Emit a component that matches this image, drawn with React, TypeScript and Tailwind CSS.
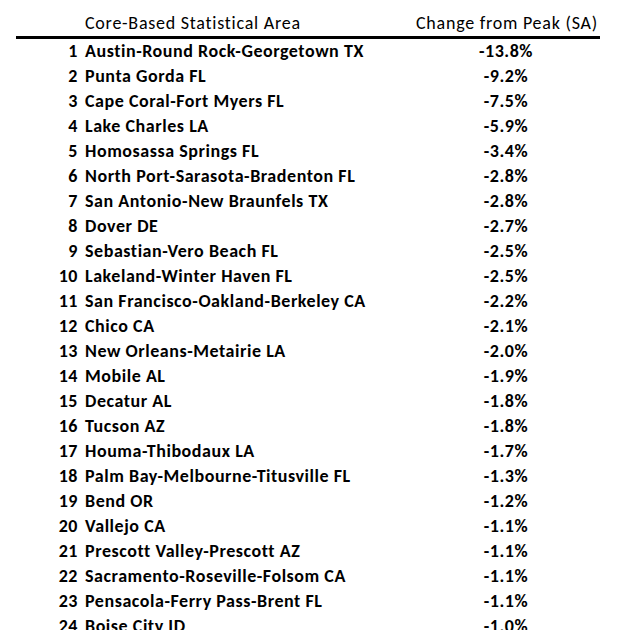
import React from "react";

const rows: [string, string][] = [
  ["Austin-Round Rock-Georgetown TX", "-13.8%"],
  ["Punta Gorda FL", "-9.2%"],
  ["Cape Coral-Fort Myers FL", "-7.5%"],
  ["Lake Charles LA", "-5.9%"],
  ["Homosassa Springs FL", "-3.4%"],
  ["North Port-Sarasota-Bradenton FL", "-2.8%"],
  ["San Antonio-New Braunfels TX", "-2.8%"],
  ["Dover DE", "-2.7%"],
  ["Sebastian-Vero Beach FL", "-2.5%"],
  ["Lakeland-Winter Haven FL", "-2.5%"],
  ["San Francisco-Oakland-Berkeley CA", "-2.2%"],
  ["Chico CA", "-2.1%"],
  ["New Orleans-Metairie LA", "-2.0%"],
  ["Mobile AL", "-1.9%"],
  ["Decatur AL", "-1.8%"],
  ["Tucson AZ", "-1.8%"],
  ["Houma-Thibodaux LA", "-1.7%"],
  ["Palm Bay-Melbourne-Titusville FL", "-1.3%"],
  ["Bend OR", "-1.2%"],
  ["Vallejo CA", "-1.1%"],
  ["Prescott Valley-Prescott AZ", "-1.1%"],
  ["Sacramento-Roseville-Folsom CA", "-1.1%"],
  ["Pensacola-Ferry Pass-Brent FL", "-1.1%"],
  ["Boise City ID", "-1.0%"],
];

export default function App() {
  return (
    <div
      className="w-[617px] h-[630px] overflow-hidden bg-white text-black pt-[11px]"
      style={{ fontFamily: "Carlito, Calibri, Lato, 'Liberation Sans', sans-serif" }}
    >
      <div className="flex h-[25px] items-center text-[18px] leading-[25px] font-normal tracking-[0.75px]">
        <div className="w-[78px]" />
        <div className="ml-[7px] w-[331px] whitespace-nowrap">Core-Based Statistical Area</div>
        <div className="w-[180px] text-center whitespace-nowrap">Change from Peak (SA)</div>
      </div>
      <div className="ml-[16px] w-[584px] h-[3px] bg-black" />
      {rows.map(([name, val], i) => (
        <div key={i} className="flex h-[25px] items-center text-[18px] leading-[25px] font-bold tracking-[0.55px]">
          <div className="w-[78px] text-right">{i + 1}</div>
          <div className="ml-[7px] w-[331px] whitespace-nowrap">{name}</div>
          <div className="w-[180px] text-center">{val}</div>
        </div>
      ))}
    </div>
  );
}
